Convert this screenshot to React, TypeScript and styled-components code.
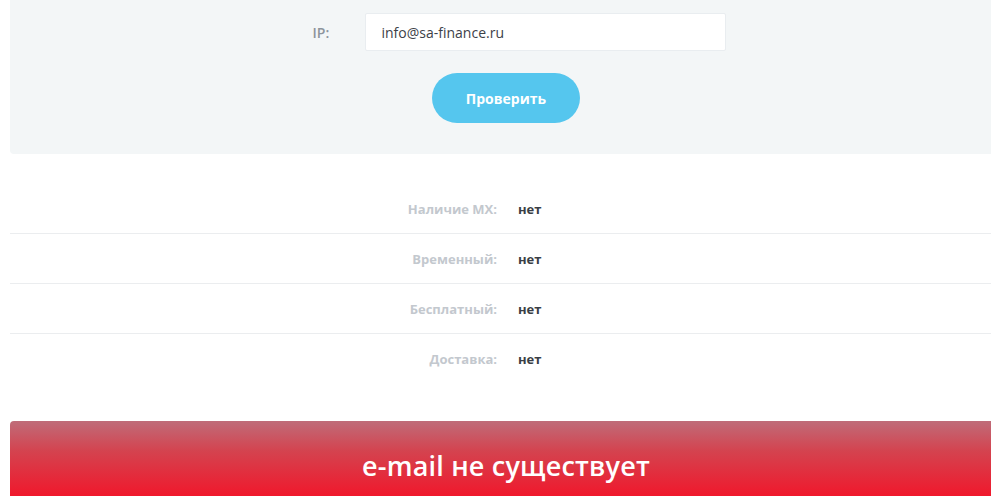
import React from "react";
import styled, { createGlobalStyle } from "styled-components";

const Global = createGlobalStyle`
  html, body { margin: 0; padding: 0; background: #fff; overflow: hidden; }
  body { font-family: "Open Sans", "Noto Sans", sans-serif; }
`;

const Page = styled.div`
  width: 992px;
  margin-left: 10px;
`;

const Panel = styled.section`
  background: #f3f6f7;
  border-radius: 0 0 4px 4px;
  padding: 13px 0 31px;
  display: flex;
  flex-direction: column;
  align-items: center;
  gap: 22px;
`;

const FormRow = styled.div`
  display: grid;
  grid-template-columns: 52px 361px;
  align-items: center;
  margin-left: 26px;
`;

const FieldLabel = styled.label`
  font-size: 14px;
  font-weight: 600;
  color: #8d949c;
`;

const Input = styled.div`
  height: 38px;
  box-sizing: border-box;
  background: #fff;
  border: 1px solid #e9edf0;
  border-radius: 2px;
  padding: 0 16px;
  display: flex;
  align-items: center;
  font-size: 14px;
  color: #3d4148;
`;

const Button = styled.button`
  width: 148px;
  height: 50px;
  border: none;
  border-radius: 25px;
  background: #55c6ee;
  color: #fff;
  font-family: "Open Sans", sans-serif;
  font-weight: 700;
  font-size: 14px;
`;

const List = styled.div`
  margin-top: 30px;
`;

const Row = styled.div<{ $last?: boolean }>`
  display: grid;
  grid-template-columns: 487px 1fr;
  align-items: center;
  height: 50px;
  border-bottom: ${(p) => (p.$last ? "none" : "1px solid #ebedef")};
  box-sizing: border-box;
  font-size: 13px;
  font-weight: 700;
`;

const RowLabel = styled.div`
  text-align: right;
  color: #c3c8ce;
`;

const RowValue = styled.div`
  padding-left: 21px;
  color: #3a3e45;
`;

const Banner = styled.div`
  margin-top: 37px;
  height: 75px;
  border-radius: 4px 4px 0 0;
  background: linear-gradient(to bottom, #bf6c79 0%, #d4434f 40%, #f0182c 100%);
  display: flex;
  justify-content: center;
  padding-top: 26px;
  box-sizing: border-box;
  color: #fff;
  font-size: 27px;
  font-weight: 600;
  letter-spacing: 0.2px;
`;

const rows = [
  ["Наличие MX:", "нет"],
  ["Временный:", "нет"],
  ["Бесплатный:", "нет"],
  ["Доставка:", "нет"],
];

export default function App() {
  return (
    <>
      <Global />
      <Page>
        <Panel>
          <FormRow>
            <FieldLabel>IP:</FieldLabel>
            <Input>info@sa-finance.ru</Input>
          </FormRow>
          <Button>Проверить</Button>
        </Panel>
        <List>
          {rows.map(([l, v], i) => (
            <Row key={l} $last={i === rows.length - 1}>
              <RowLabel>{l}</RowLabel>
              <RowValue>{v}</RowValue>
            </Row>
          ))}
        </List>
        <Banner>e-mail не существует</Banner>
      </Page>
    </>
  );
}
